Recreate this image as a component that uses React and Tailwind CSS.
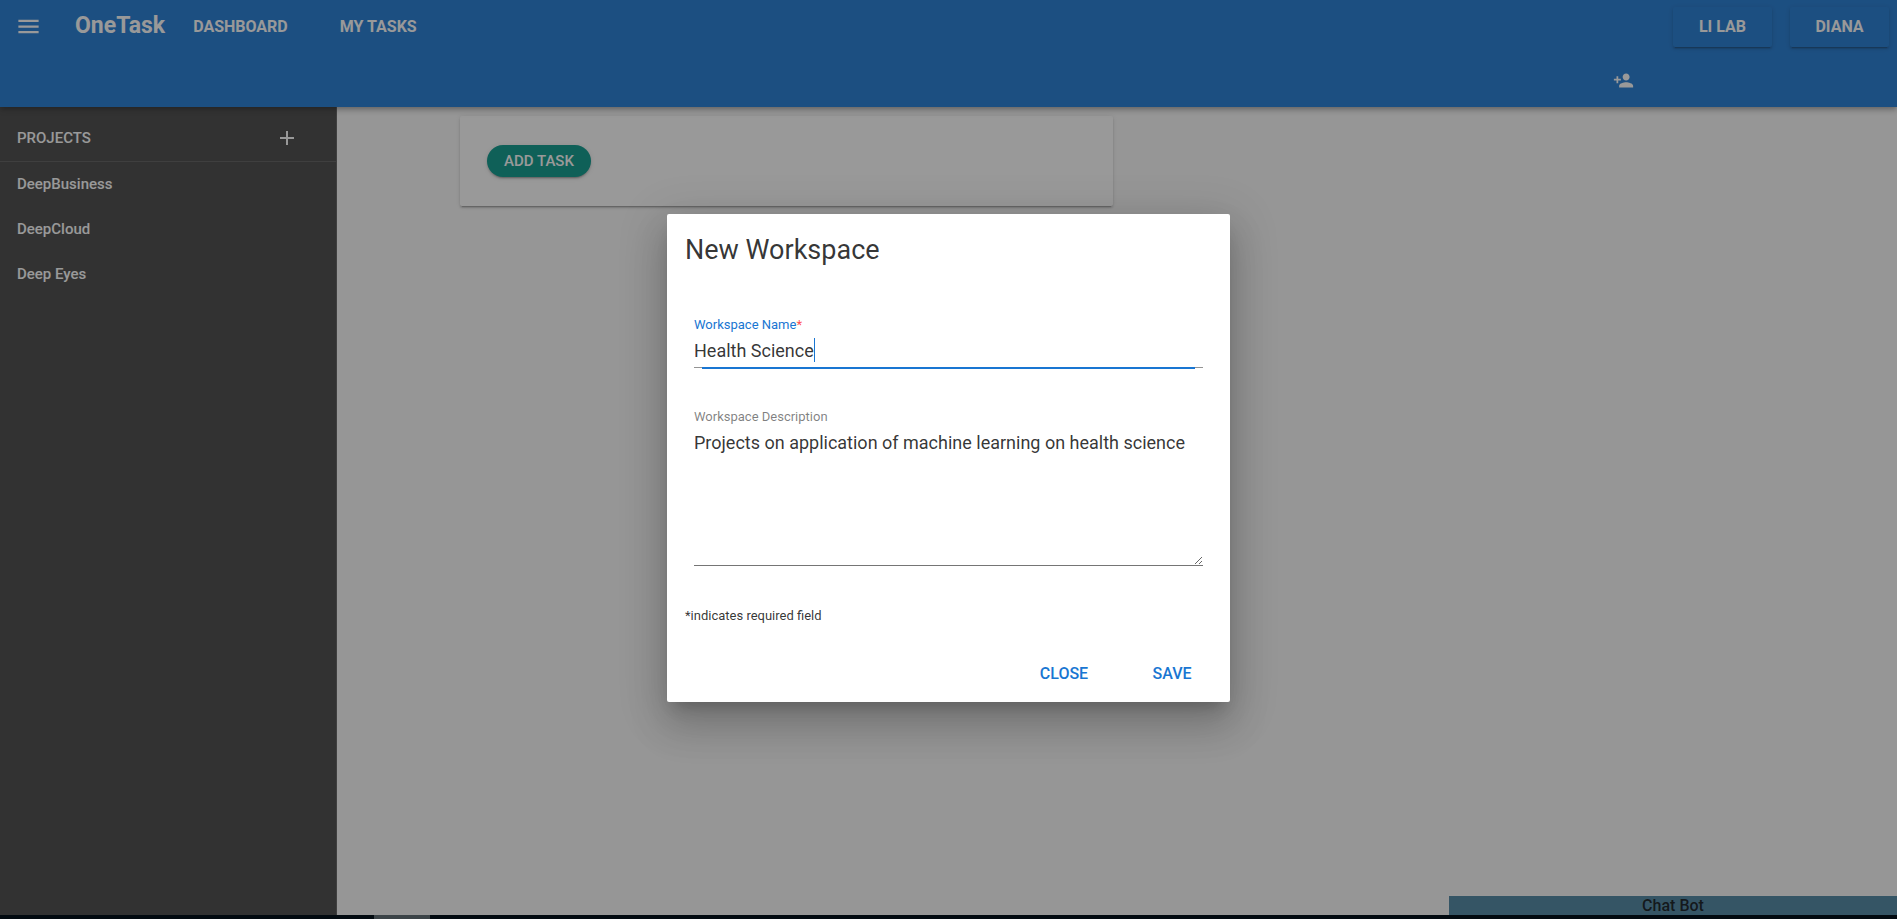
import { MdMenu, MdAdd, MdPersonAdd } from "react-icons/md";

const projects = ["DeepBusiness", "DeepCloud", "Deep Eyes"];

function Header() {
  const raised =
    "h-10 w-[99px] rounded-[2px] text-base font-bold shadow-[0_3px_1px_-2px_rgba(0,0,0,.2),0_2px_2px_0_rgba(0,0,0,.14),0_1px_5px_0_rgba(0,0,0,.12)]";
  return (
    <header className="relative z-10 bg-[#1976d2] text-white shadow-[0_2px_4px_-1px_rgba(0,0,0,.2),0_4px_5px_0_rgba(0,0,0,.14),0_1px_10px_0_rgba(0,0,0,.12)]">
      <div className="flex h-[53px] items-center pr-2 pl-[15px]">
        <button type="button" aria-label="Menu" className="w-[60px]">
          <MdMenu size={27} />
        </button>
        <a href="#home" className="text-[23px] font-bold">
          OneTask
        </a>
        <nav className="ml-7 flex flex-1 gap-[52px] text-base font-bold">
          <a href="#dashboard">DASHBOARD</a>
          <a href="#tasks">MY TASKS</a>
        </nav>
        <div className="flex gap-[18px]">
          <button type="button" className={raised}>
            LI LAB
          </button>
          <button type="button" className={raised}>
            DIANA
          </button>
        </div>
      </div>
      <div className="flex h-[54px] items-center justify-end pr-[263px]">
        <button type="button" aria-label="Add member">
          <MdPersonAdd size={21} />
        </button>
      </div>
    </header>
  );
}

function Sidebar() {
  return (
    <aside className="w-[337px] shrink-0 border-r border-[#5c5c5c] bg-[#424242] text-[15px] font-medium text-white">
      <div className="flex h-[55px] items-center justify-between border-b border-white/12 pt-2 pr-[37px] pl-[17px]">
        <h2>PROJECTS</h2>
        <button type="button" aria-label="Add project">
          <MdAdd size={24} />
        </button>
      </div>
      <ul>
        {projects.map((name) => (
          <li key={name}>
            <a href="#project" className="flex h-[45px] items-center pl-[17px]">
              {name}
            </a>
          </li>
        ))}
      </ul>
    </aside>
  );
}

function WorkspaceDialog() {
  return (
    <form
      role="dialog"
      aria-labelledby="dialog-title"
      className="w-[563px] rounded-[2px] bg-white text-black/80 shadow-[0_11px_15px_-7px_rgba(0,0,0,.2),0_24px_38px_3px_rgba(0,0,0,.14),0_9px_46px_8px_rgba(0,0,0,.12)]"
    >
      <h1 id="dialog-title" className="px-[18px] pt-[18px] text-[27px] leading-9">
        New Workspace
      </h1>
      <div className="px-[27px] pt-12">
        <label htmlFor="ws-name" className="block text-[13px] leading-[18px] text-[#1976d2]">
          Workspace Name<span className="text-[#ff5252]">*</span>
        </label>
        <div className="flex h-[34px] items-center border-b border-black/42 text-[18px]">
          <input id="ws-name" defaultValue="Health Science" className="field-sizing-content h-6 outline-none" />
          <span className="h-6 w-px bg-[#1976d2]" />
        </div>
        <div className="mx-2 -mt-px h-0.5 bg-[#1976d2]" />
        <label htmlFor="ws-desc" className="mt-[39px] block text-[13px] leading-[18px] text-black/50">
          Workspace Description
        </label>
        <textarea
          id="ws-desc"
          defaultValue="Projects on application of machine learning on health science"
          className="block h-[140px] w-full resize-y border-b border-black/54 pt-[3px] text-[18px] leading-7 outline-none"
        />
      </div>
      <p className="px-[18px] pt-10 text-[13px] leading-5">*indicates required field</p>
      <div className="flex justify-end gap-2 px-2 pt-7 pb-2 text-base font-medium text-[#1976d2]">
        <button type="button" className="h-10 w-[100px]">
          CLOSE
        </button>
        <button type="button" className="h-10 w-[100px]">
          SAVE
        </button>
      </div>
    </form>
  );
}

export default function App() {
  return (
    <div className="flex h-screen flex-col font-['Roboto',sans-serif]">
      <div className="relative flex min-h-0 flex-1 flex-col overflow-hidden bg-[#fafafa]">
        <Header />
        <div className="flex min-h-0 flex-1">
          <Sidebar />
          <main className="flex flex-1 flex-col items-end justify-between">
            <div className="w-full pt-[9px] pl-[123px]">
              <section className="w-[653px] rounded-[2px] bg-white px-[27px] py-[29px] shadow-[0_3px_1px_-2px_rgba(0,0,0,.2),0_2px_2px_0_rgba(0,0,0,.14),0_1px_5px_0_rgba(0,0,0,.12)]">
                <button
                  type="button"
                  className="block h-8 w-[104px] rounded-full bg-[#009688] text-[15px] font-medium text-white shadow-[0_3px_1px_-2px_rgba(0,0,0,.2),0_2px_2px_0_rgba(0,0,0,.14),0_1px_5px_0_rgba(0,0,0,.12)]"
                >
                  ADD TASK
                </button>
              </section>
            </div>
            <button
              type="button"
              className="h-[19px] w-[448px] bg-[#4682a0] pt-px text-base leading-[18px] font-medium text-black/87 shadow-[0_0_2px_1px_rgba(255,255,255,.5)]"
            >
              Chat Bot
            </button>
          </main>
        </div>
        <div className="absolute inset-0 z-20 flex items-center justify-center bg-[#212121]/46">
          <WorkspaceDialog />
        </div>
      </div>
      <div className="h-1 shrink-0 bg-[#020a10] pl-[374px]">
        <div className="h-full w-14 bg-[#3c4448]" />
      </div>
    </div>
  );
}
